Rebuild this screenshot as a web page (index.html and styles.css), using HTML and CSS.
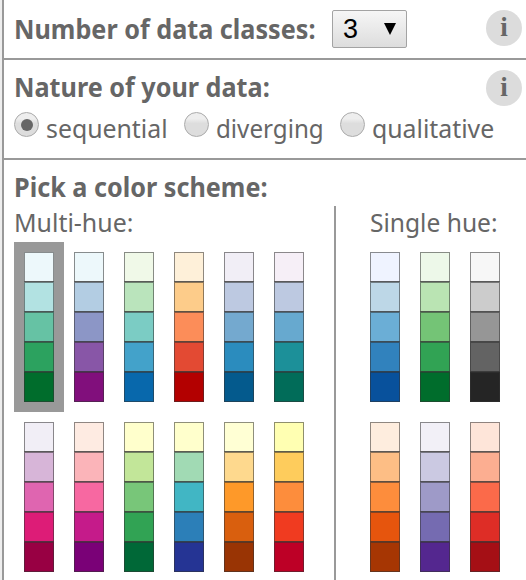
FILE: index.html
```html
<!DOCTYPE html>
<html lang="en">
<head>
<meta charset="utf-8">
<title>Color schemes</title>
<link rel="stylesheet" href="styles.css">
</head>
<body>
<main class="panel">
  <section class="row classes">
    <h2 class="title t-number">Number of data classes:</h2>
    <div class="select"><span>3</span><svg width="12" height="12" viewBox="0 0 12 12"><path d="M0 0H12L6 12Z"/></svg></div>
    <span class="info">i</span>
  </section>
  <section class="row nature">
    <div class="head"><h2 class="title t-nature">Nature of your data:</h2><span class="info">i</span></div>
    <div class="options">
      <label class="option o-seq"><span class="radio checked"></span><span class="text">sequential</span></label>
      <label class="option o-div"><span class="radio"></span><span class="text">diverging</span></label>
      <label class="option o-qual"><span class="radio"></span><span class="text">qualitative</span></label>
    </div>
  </section>
  <section class="schemes">
    <h2 class="title t-pick">Pick a color scheme:</h2>
    <div class="groups">
      <div class="multi"><h3 class="sub s-multi">Multi-hue:</h3><div class="ramps" id="multi"></div></div>
      <div class="single"><h3 class="sub s-single">Single hue:</h3><div class="ramps" id="single"></div></div>
    </div>
  </section>
</main>
<script src="script.js"></script>
</body>
</html>
```
FILE: styles.css
```css
* { box-sizing: border-box; }
body {
  margin: 0;
  height: 580px;
  overflow: hidden;
  background: #eee;
  color: #666;
  font: 26px/36px "Noto Sans", "Open Sans", sans-serif;
}
.panel {
  margin-left: 2px;
  width: 524px;
  height: 580px;
  overflow: hidden;
  border-left: 2px solid #999;
  background: #fff;
}
.row { border-bottom: 2px solid #999; }
.title, .sub { margin: 0; font-size: 26px; line-height: 36px; white-space: nowrap; }
.sub { font-weight: 400; line-height: 32px; height: 36px; transform: scaleX(.958); transform-origin: 0 0; }
.title { font-weight: 700; line-height: 34px; height: 36px; transform: scaleX(.969); transform-origin: 0 0; }
.classes { display: flex; height: 60px; padding: 10px 4px 0 10px; }
.t-number { width: 318px; line-height: 38px; }
.select {
  display: flex;
  justify-content: space-between;
  align-items: center;
  width: 75px;
  height: 38px;
  padding: 0 10px;
  border: 1px solid #a3a3a3;
  border-radius: 2px;
  background: linear-gradient(#f6f6f6, #ddd);
  color: #000;
  font: 27px/38px "Liberation Sans", sans-serif;
}
.info {
  width: 36px;
  height: 36px;
  margin-left: auto;
  border-radius: 50%;
  background: #dcdcdc;
  color: #666;
  font: bold 27px/34px "Liberation Serif", serif;
  text-align: center;
}
.nature { height: 100px; padding: 10px 4px 0 10px; }
.head { display: flex; }
.options { display: flex; margin-top: 5px; }
.option { display: flex; }
.o-seq { width: 170px; }
.o-div { width: 156px; }
.radio {
  display: flex;
  width: 25px;
  height: 25px;
  margin: 1px 7px 0 0;
  border: 1px solid #aaa;
  border-radius: 50%;
  background: linear-gradient(#eee 25%, #ddd 45%);
}
.radio.checked::after {
  content: "";
  width: 12px;
  height: 12px;
  margin: auto;
  border-radius: 50%;
  background: #666;
}
.text { line-height: 34px; white-space: nowrap; transform: scaleX(.955); transform-origin: 0 0; }
.o-div .text { transform: scaleX(.93); }
.schemes { padding: 10px 0 0 10px; }
.groups { display: flex; height: 374px; }
.multi { width: 322px; border-right: 2px solid #999; }
.single { padding-left: 24px; }
.s-single { padding-left: 10px; transform: scaleX(.945); transform-origin: 10px 0; }
.ramps { display: grid; grid-template-columns: repeat(6, 50px); }
.single .ramps { grid-template-columns: repeat(3, 50px); }
.ramp { width: 50px; height: 170px; padding: 10px; }
.ramp.selected { background: #999; }
.ramp svg { display: block; overflow: hidden; }
.ramp rect { stroke: #333; stroke-opacity: .55; stroke-width: 2px; }
```
FILE: script.js
```js
const schemes = {
  multi: [
    "edf8fb b2e2e2 66c2a4 2ca25f 006d2c",
    "edf8fb b3cde3 8c96c6 8856a7 810f7c",
    "f0f9e8 bae4bc 7bccc4 43a2ca 0868ac",
    "fef0d9 fdcc8a fc8d59 e34a33 b30000",
    "f1eef6 bdc9e1 74a9cf 2b8cbe 045a8d",
    "f6eff7 bdc9e1 67a9cf 1c9099 016c59",
    "f1eef6 d7b5d8 df65b0 dd1c77 980043",
    "feebe2 fbb4b9 f768a1 c51b8a 7a0177",
    "ffffcc c2e699 78c679 31a354 006837",
    "ffffcc a1dab4 41b6c4 2c7fb8 253494",
    "ffffd4 fed98e fe9929 d95f0e 993404",
    "ffffb2 fecc5c fd8d3c f03b20 bd0026"
  ],
  single: [
    "eff3ff bdd7e7 6baed6 3182bd 08519c",
    "edf8e9 bae4b3 74c476 31a354 006d2c",
    "f7f7f7 cccccc 969696 636363 252525",
    "feedde fdbe85 fd8d3c e6550d a63603",
    "f2f0f7 cbc9e2 9e9ac8 756bb1 54278f",
    "fee5d9 fcae91 fb6a4a de2d26 a50f15"
  ]
};
for (const [id, ramps] of Object.entries(schemes)) {
  document.getElementById(id).innerHTML = ramps.map((ramp, i) => {
    const cells = ramp.split(" ").map((c, n) =>
      `<rect fill="#${c}" y="${n * 30}" width="30" height="30"/>`).join("");
    const state = id === "multi" && i === 0 ? " selected" : "";
    return `<div class="ramp${state}"><svg width="30" height="150">${cells}</svg></div>`;
  }).join("");
}
```
